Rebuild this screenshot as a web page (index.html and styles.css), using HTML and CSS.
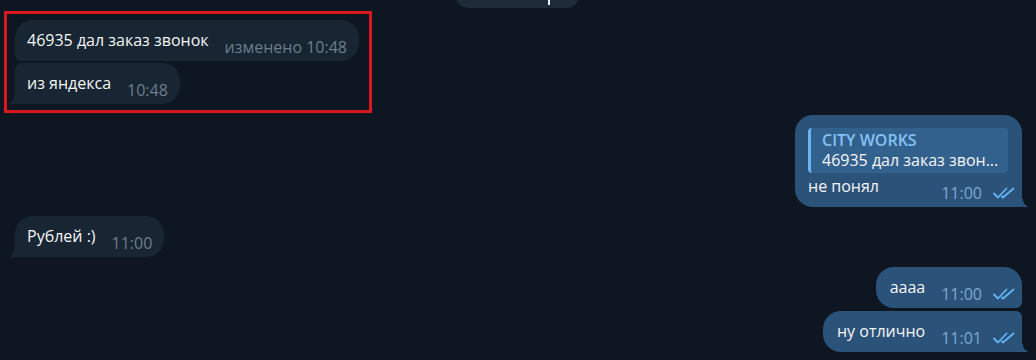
FILE: index.html
```html
<!DOCTYPE html>
<html lang="ru">
<head>
    <meta charset="UTF-8">
    <title>Чат</title>
    <link rel="stylesheet" href="styles.css">
</head>
<body>
    <div class="chat">
        <div class="service"><span class="caret"></span></div>

        <div class="highlight">
            <div class="msg in first">
                <span class="text">46935 дал заказ звонок</span>
                <span class="time">изменено 10:48</span>
            </div>
            <div class="msg in last">
                <span class="text">из яндекса</span>
                <span class="time">10:48</span>
            </div>
        </div>

        <div class="msg out single has-reply">
            <div class="reply">
                <div class="reply-name">CITY WORKS</div>
                <div class="reply-text">46935 дал заказ звон...</div>
            </div>
            <div class="row">
                <span class="text">не понял</span>
                <span class="time">11:00
                    <svg class="checks" width="22" height="12" viewBox="0 0 22 12"><path d="M1 6.5 L5 10.5 L13.5 1.5 M9 9.5 L10 10.5 L20.5 1.5"/></svg>
                </span>
            </div>
        </div>

        <div class="msg in single">
            <span class="text">Рублей :)</span>
            <span class="time">11:00</span>
        </div>

        <div class="msg out first gap">
            <span class="text">аааа</span>
            <span class="time">11:00
                <svg class="checks" width="22" height="12" viewBox="0 0 22 12"><path d="M1 6.5 L5 10.5 L13.5 1.5 M9 9.5 L10 10.5 L20.5 1.5"/></svg>
            </span>
        </div>
        <div class="msg out last">
            <span class="text">ну отлично</span>
            <span class="time">11:01
                <svg class="checks" width="22" height="12" viewBox="0 0 22 12"><path d="M1 6.5 L5 10.5 L13.5 1.5 M9 9.5 L10 10.5 L20.5 1.5"/></svg>
            </span>
        </div>
    </div>
</body>
</html>
```

FILE: styles.css
```css
body {
    margin: 0;
    background-color: #0e1621;
    font-family: "Open Sans", "Noto Sans", sans-serif;
    color: #f5f5f5;
    overflow: hidden;
}
.chat {
    height: 360px;
    display: flex;
    flex-direction: column;
    padding: 0 14px 0 15px;
}
.service {
    align-self: center;
    width: 123px;
    height: 30px;
    margin-top: -22px;
    margin-left: -2px;
    background: #1e2b39;
    border-radius: 12px;
    position: relative;
}
.caret {
    position: absolute;
    left: 92px;
    bottom: 3px;
    width: 2px;
    height: 6px;
    background: #f0f0f0;
}
.highlight {
    align-self: flex-start;
    margin: 3px 0 0 -11px;
    padding: 6px 10px 6px 8px;
    border: 3px solid #d8191e;
    display: flex;
    flex-direction: column;
    align-items: flex-start;
    gap: 2px;
}
.msg {
    position: relative;
    display: flex;
    align-items: flex-end;
    gap: 16px;
    padding: 10px 12px 5px 12px;
    border-radius: 18px;
    font-size: 16px;
}
.msg .text {
    line-height: 20px;
    padding-bottom: 6px;
    white-space: nowrap;
}
.msg .time {
    font-size: 16px;
    line-height: 18px;
    white-space: nowrap;
    display: flex;
    align-items: center;
    gap: 11px;
}
.in {
    align-self: flex-start;
    background: #182533;
}
.in .time {
    color: #6c7d8d;
}
.out {
    align-self: flex-end;
    background: #2b5278;
    padding-left: 14px;
    padding-right: 7px;
}
.out .time {
    color: #7ea8d0;
}
.checks {
    fill: none;
    stroke: #64b3f4;
    stroke-width: 1.8;
    stroke-linecap: round;
    stroke-linejoin: round;
}
.in.first { border-bottom-left-radius: 6px; }
.in.last { border-top-left-radius: 6px; border-bottom-left-radius: 0; }
.in.single { border-bottom-left-radius: 0; margin-top: 9px; }
.out.first { border-bottom-right-radius: 6px; }
.out.last { border-top-right-radius: 6px; border-bottom-right-radius: 0; margin-top: 3px; }
.out.single { border-bottom-right-radius: 0; }
.gap { margin-top: 10px; }

.in.last::before, .in.single::before {
    content: "";
    position: absolute;
    left: -7px;
    bottom: 0;
    width: 7px;
    height: 12px;
    background: radial-gradient(ellipse 7px 12px at 0 0, transparent 97%, #182533 100%);
}
.out.last::after, .out.single::after {
    content: "";
    position: absolute;
    right: -7px;
    bottom: 0;
    width: 7px;
    height: 12px;
    background: radial-gradient(ellipse 7px 12px at 100% 0, transparent 97%, #2b5278 100%);
}

.has-reply {
    margin-top: 2px;
    flex-direction: column;
    align-items: stretch;
    gap: 3px;
    padding: 13px 7px 5px 13px;
}
.reply {
    width: 186px;
    margin-right: 7px;
    padding: 2px 0 2px 11px;
    border-left: 3px solid #6ab3f3;
    border-radius: 4px;
    background: #33618d;
    font-size: 16px;
    line-height: 20px;
}
.reply-name {
    color: #86c2f6;
    font-weight: 600;
}
.reply-text {
    white-space: nowrap;
    overflow: hidden;
    text-overflow: ellipsis;
    padding-bottom: 1px;
}
.row {
    display: flex;
    align-items: flex-end;
    justify-content: space-between;
    gap: 16px;
}
```
